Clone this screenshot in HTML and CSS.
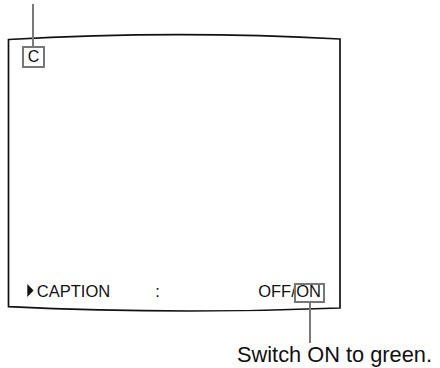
FILE: index.html
```html
<!DOCTYPE html>
<html>
<head>
<meta charset="utf-8">
<link rel="stylesheet" href="styles.css">
</head>
<body>
<div class="figure">
  <svg class="lines" width="440" height="368" viewBox="0 0 440 368">
    <path class="frame" d="M8.5,39.5 Q174,30.2 340,39 L340,308 Q174,314.6 8.5,306.7 Z"/>
    <line class="leader" x1="33" y1="4" x2="33" y2="46"/>
    <line class="leader" x1="310" y1="303" x2="310" y2="343"/>
  </svg>
  <div class="screen">
    <div class="cbox">C</div>
    <div class="row">
      <svg class="arrow" width="7" height="13" viewBox="0 0 7 13"><path d="M0.3,0 L6.6,6.5 L0.3,13 Z"/></svg>
      <span class="label">CAPTION</span>
      <span class="colon">:</span>
      <span class="value">OFF/<span class="onbox">ON</span></span>
    </div>
  </div>
  <div class="caption">Switch ON to green.</div>
</div>
</body>
</html>
```
FILE: styles.css
```css
html, body {
  margin: 0;
  padding: 0;
  background: #fff;
}
body {
  font-family: "Liberation Sans", Arial, sans-serif;
  color: #111;
}
.figure {
  position: relative;
  width: 440px;
  height: 368px;
  overflow: hidden;
}
.lines {
  position: absolute;
  left: 0;
  top: 0;
}
.frame {
  fill: none;
  stroke: #111;
  stroke-width: 1.7;
}
.leader {
  stroke: #7a7a7a;
  stroke-width: 2;
}
.screen {
  position: relative;
  box-sizing: border-box;
  margin: 40px 0 0 8px;
  width: 332px;
  height: 268px;
  padding: 6px 15px 5.3px 14px;
  display: flex;
  flex-direction: column;
  justify-content: space-between;
  align-items: flex-start;
}
.cbox {
  box-sizing: border-box;
  width: 23px;
  height: 22px;
  border: 2px solid #777;
  font-size: 16px;
  line-height: 18px;
  text-align: center;
  color: #111;
}
.row {
  align-self: stretch;
  display: flex;
  align-items: baseline;
  margin-left: 4.8px;
  font-size: 16.5px;
  line-height: 19px;
}
.arrow {
  fill: #111;
  margin-right: 3px;
}
.colon {
  margin-left: 45px;
}
.value {
  margin-left: auto;
}
.onbox {
  display: inline-block;
  border: 2px solid #777;
  line-height: 13px;
  padding: 0 2px 3px 0;
  margin-left: -1.5px;
}
.caption {
  margin: 34.6px 0 0 237px;
  font-size: 21.8px;
  line-height: 24px;
  white-space: nowrap;
  color: #111;
}
```
